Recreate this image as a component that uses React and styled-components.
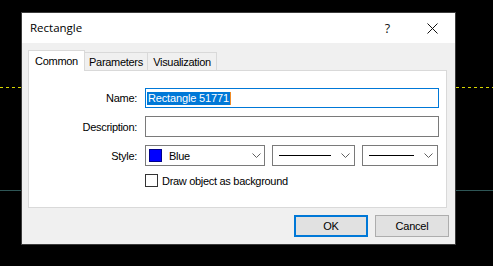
import React from "react";
import styled, { createGlobalStyle } from "styled-components";

const Global = createGlobalStyle`
  html, body { margin: 0; padding: 0; background: #000; }
  body { width: 493px; height: 266px; overflow: hidden; }
  * { box-sizing: border-box; }
`;

const Desktop = styled.div`
  width: 493px;
  height: 266px;
  padding: 12px 0 0 21px;
  background:
    repeating-linear-gradient(to right, #d8d800 0 3px, transparent 3px 6px) 0 87px / 100% 1px no-repeat,
    linear-gradient(#2e5656, #2e5656) 0 190px / 100% 1px no-repeat,
    #000;
  font-family: "Liberation Sans", Arial, sans-serif;
  font-size: 11px;
  color: #000;
`;

const Window = styled.div`
  width: 435px;
  height: 233px;
  border: 1px solid #3c3c3c;
  background: #f0f0f0;
  display: flex;
  flex-direction: column;
`;

const TitleBar = styled.div`
  height: 30px;
  background: #fff;
  display: flex;
  align-items: center;
`;

const Title = styled.div`
  flex: 1;
  padding-left: 8px;
  font-family: "Open Sans", "Noto Sans", sans-serif;
  font-size: 11.5px;
  padding-bottom: 1px;
`;

const CaptionButton = styled.div`
  width: 45px;
  height: 30px;
  display: flex;
  align-items: center;
  justify-content: center;
  font-family: "Open Sans", "Noto Sans", sans-serif;
  font-size: 12.5px;
  color: #111;
`;

const Body = styled.div`
  flex: 1;
  display: flex;
  flex-direction: column;
  padding: 7px 6px 0 6px;
`;

const TabStrip = styled.div`
  display: flex;
  align-items: flex-end;
  height: 20px;
  position: relative;
  z-index: 1;
`;

const Tab = styled.div`
  width: ${(p) => p.$w}px;
  height: ${(p) => (p.$active ? 21 : 18)}px;
  margin-bottom: ${(p) => (p.$active ? -1 : 0)}px;
  background: ${(p) => (p.$active ? "#fff" : "#f0f0f0")};
  border-top: 1px solid #d9d9d9;
  border-left: ${(p) => (p.$active ? "1px solid #d9d9d9" : "none")};
  border-right: 1px solid #d9d9d9;
  display: flex;
  align-items: center;
  justify-content: center;
  padding: ${(p) => (p.$active ? "0 0 1px" : "1px 0 0")};
  letter-spacing: -0.3px;
  white-space: nowrap;
`;

const Panel = styled.div`
  height: 138px;
  margin-right: 2px;
  background: #fff;
  border: 1px solid #d9d9d9;
  padding: 17px 7px 0 0;
  display: grid;
  grid-template-columns: 108px 1fr;
  grid-template-rows: 20px 21px 21px 13px;
  column-gap: 8px;
  row-gap: 8px;
`;

const Label = styled.div`
  text-align: right;
  align-self: center;
  letter-spacing: -0.3px;
  white-space: nowrap;
`;

const TextField = styled.div`
  border: 1px solid ${(p) => (p.$focused ? "#0078d7" : "#7a7a7a")};
  background: #fff;
  display: flex;
  align-items: center;
  padding: 1px 0 0 1px;
`;

const Selection = styled.span`
  background: #0078d7;
  color: #fff;
  line-height: 13px;
  padding: 0 1px;
  letter-spacing: -0.15px;
`;

const Caret = styled.span`
  width: 1px;
  height: 13px;
  background: #f08a24;
`;

const ComboRow = styled.div`
  display: flex;
  gap: 7px;
`;

const Combo = styled.div`
  width: ${(p) => p.$w}px;
  height: 21px;
  border: 1px solid #7a7a7a;
  background: #fff;
  display: flex;
  align-items: center;
  padding: ${(p) => (p.$line ? "0 4px 0 6px" : "0 3px 0 3px")};
`;

const Swatch = styled.span`
  width: 13px;
  height: 13px;
  background: #0000ff;
  border: 1px solid #00008a;
  margin-right: 7px;
`;

const ComboText = styled.span`
  flex: 1;
  letter-spacing: -0.3px;
`;

const LineSample = styled.span`
  flex: 1;
  height: 1px;
  background: #000;
  margin-right: 10px;
`;

const CheckRow = styled.div`
  grid-column: 2;
  display: flex;
  align-items: center;
  gap: 4px;
  letter-spacing: -0.3px;
`;

const CheckBox = styled.span`
  width: 13px;
  height: 13px;
  border: 1px solid #333;
  background: #fff;
`;

const Footer = styled.div`
  display: flex;
  justify-content: flex-end;
  gap: 7px;
  margin-top: 7px;
`;

const Button = styled.div`
  width: 74px;
  height: 22px;
  background: #e1e1e1;
  border: ${(p) => (p.$default ? "2px solid #0078d7" : "1px solid #adadad")};
  display: flex;
  align-items: center;
  justify-content: center;
  letter-spacing: -0.2px;
`;

const Chevron = () => (
  <svg width="9" height="5" viewBox="0 0 9 5" style={{ display: "block", flex: "none" }}>
    <polyline points="0.5,0.5 4.5,4.5 8.5,0.5" fill="none" stroke="#606060" strokeWidth="1" />
  </svg>
);

const CloseIcon = () => (
  <svg width="11" height="11" viewBox="0 0 11 11" style={{ display: "block" }}>
    <path d="M0.5 0.5 L10.5 10.5 M10.5 0.5 L0.5 10.5" stroke="#111" strokeWidth="1" fill="none" />
  </svg>
);

export default function App() {
  return (
    <>
      <Global />
      <Desktop>
        <Window>
          <TitleBar>
            <Title>Rectangle</Title>
            <CaptionButton>?</CaptionButton>
            <CaptionButton>
              <CloseIcon />
            </CaptionButton>
          </TitleBar>
          <Body>
            <TabStrip>
              <Tab $active $w={57}>Common</Tab>
              <Tab $w={63}>Parameters</Tab>
              <Tab $w={69}>Visualization</Tab>
            </TabStrip>
            <Panel>
              <Label>Name:</Label>
              <TextField $focused>
                <Selection>Rectangle 51771</Selection>
                <Caret />
              </TextField>
              <Label>Description:</Label>
              <TextField />
              <Label>Style:</Label>
              <ComboRow>
                <Combo $w={120}>
                  <Swatch />
                  <ComboText>Blue</ComboText>
                  <Chevron />
                </Combo>
                <Combo $w={83} $line>
                  <LineSample />
                  <Chevron />
                </Combo>
                <Combo $w={76} $line>
                  <LineSample />
                  <Chevron />
                </Combo>
              </ComboRow>
              <CheckRow>
                <CheckBox />
                <span>Draw object as background</span>
              </CheckRow>
            </Panel>
            <Footer>
              <Button $default>OK</Button>
              <Button>Cancel</Button>
            </Footer>
          </Body>
        </Window>
      </Desktop>
    </>
  );
}
